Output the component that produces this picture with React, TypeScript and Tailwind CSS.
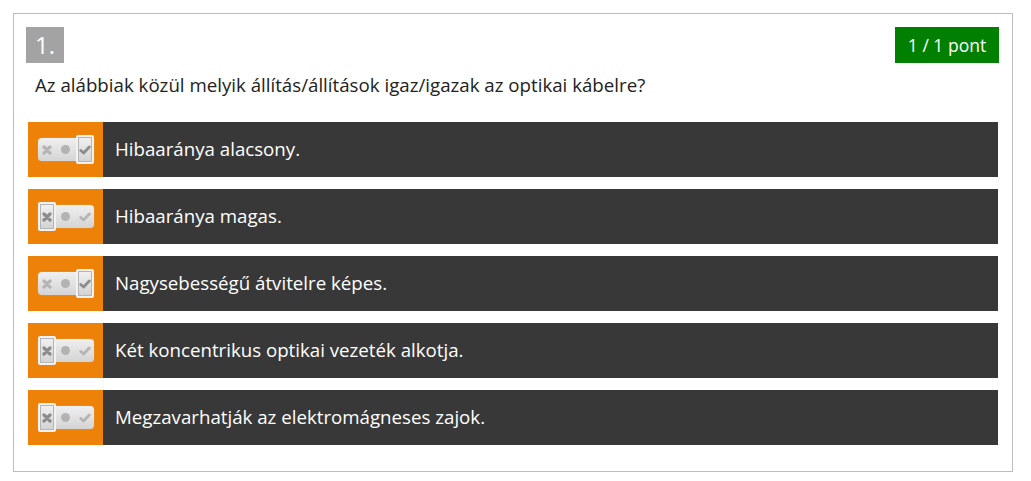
import React from "react";

type Choice = "false" | "true";

const answers: { text: string; choice: Choice }[] = [
  { text: "Hibaaránya alacsony.", choice: "true" },
  { text: "Hibaaránya magas.", choice: "false" },
  { text: "Nagysebességű átvitelre képes.", choice: "true" },
  { text: "Két koncentrikus optikai vezeték alkotja.", choice: "false" },
  { text: "Megzavarhatják az elektromágneses zajok.", choice: "false" },
];

function Toggle({ choice }: { choice: Choice }) {
  const xColor = choice === "false" ? "#8c8c8c" : "#b5b5b5";
  const vColor = choice === "true" ? "#8c8c8c" : "#b5b5b5";
  return (
    <div className="relative h-[23px] w-[56px] rounded-[4px] bg-gradient-to-b from-[#f0f0f0] to-[#d4d4d4] shadow-[0_0_1px_#ccc]">
      <div className="flex h-full items-center">
        <div className="flex w-[18px] justify-center">
          <svg width="10" height="10" viewBox="0 0 10 10">
            <path d="M2 2 L8 8 M8 2 L2 8" stroke={xColor} strokeWidth="3.2" strokeLinecap="round" />
          </svg>
        </div>
        <div className="flex w-[20px] justify-center">
          <div className="h-[9px] w-[9px] rounded-full bg-[#b3b3b3]" />
        </div>
        <div className="flex w-[18px] justify-center">
          <svg width="12" height="10" viewBox="0 0 12 10">
            <path d="M1.8 5.5 L4.6 8 L10.3 2" stroke={vColor} strokeWidth="2.8" fill="none" strokeLinecap="round" strokeLinejoin="round" />
          </svg>
        </div>
      </div>
      <div
        className={
          "absolute top-[-3px] h-[29px] w-[18px] rounded-[2px] border-2 border-[#f2f2f2] shadow-[inset_0_0_0_1px_#b5b5b5] " +
          (choice === "true" ? "right-0" : "left-0")
        }
      />
    </div>
  );
}

export default function App() {
  return (
    <div className="bg-white p-[13px] pr-[18px]" style={{ fontFamily: '"Open Sans", "Noto Sans", sans-serif' }}>
      <div className="border border-[#bdbdbd] pl-[12px] pr-[13px] pt-[13px] pb-[26px]">
        <div className="flex h-9 items-center justify-between">
          <div className="flex h-9 w-[38px] items-center justify-center bg-[#a3a3a3] text-[24px] text-white">1.</div>
          <div className="flex h-9 w-[104px] items-center justify-center bg-[#008000] text-[17.5px] text-white">1 / 1 pont</div>
        </div>
        <p className="mt-[10px] pl-[9px] text-[18.7px] leading-6 text-[#222]">
          Az alábbiak közül melyik állítás/állítások igaz/igazak az optikai kábelre?
        </p>
        <div className="mt-[25px] ml-[2px] mr-[1px] flex flex-col gap-3">
          {answers.map((a) => (
            <div key={a.text} className="flex h-[55px] bg-[#383838]">
              <div className="flex w-[75px] items-center justify-center bg-[#ee8208]">
                <Toggle choice={a.choice} />
              </div>
              <div className="flex items-center pl-[12px] text-[18.7px] text-white">{a.text}</div>
            </div>
          ))}
        </div>
      </div>
    </div>
  );
}
